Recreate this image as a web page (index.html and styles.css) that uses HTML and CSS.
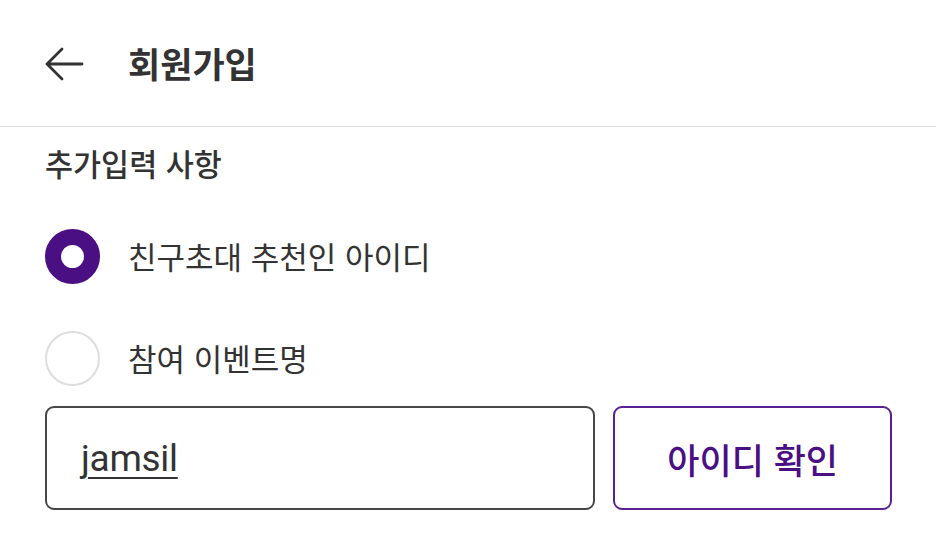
FILE: index.html
```html
<!DOCTYPE html>
<html lang="ko">
<head>
<meta charset="utf-8">
<title>회원가입</title>
<link rel="stylesheet" href="styles.css">
</head>
<body>
<header class="topbar">
  <svg class="back" width="40" height="36" viewBox="0 0 40 36" aria-hidden="true">
    <path d="M38 18 H3 M18 3 L3 18 L18 33" fill="none" stroke="#333" stroke-width="2.8" stroke-linecap="round" stroke-linejoin="round"/>
  </svg>
  <h1 class="title">회원가입</h1>
</header>
<main class="content">
  <h2 class="section-title">추가입력 사항</h2>
  <div class="radio-row row-first">
    <span class="radio checked"></span>
    <span class="radio-label">친구초대 추천인 아이디</span>
  </div>
  <div class="radio-row row-second">
    <span class="radio"></span>
    <span class="radio-label">참여 이벤트명</span>
  </div>
  <div class="input-row">
    <div class="text-field"><span class="typed">jamsil</span></div>
    <button class="check-btn">아이디 확인</button>
  </div>
</main>
</body>
</html>
```

FILE: styles.css
```css
html, body {
  margin: 0;
  padding: 0;
  background: #fff;
}
body {
  font-family: "Noto Sans CJK KR", "Noto Sans", sans-serif;
  color: #333;
  width: 936px;
  height: 539px;
  overflow: hidden;
}
.topbar {
  border-bottom: 1px solid #dcdcdc;
  display: flex;
  align-items: center;
  padding-left: 44px;
  box-sizing: border-box;
  height: 127px;
}
.back {
  display: block;
  margin-top: 2px;
}
.title {
  margin: 0 0 0 44px;
  font-size: 35px;
  font-weight: 700;
  line-height: 40px;
  color: #333;
}
.content {
  padding: 0 44px 0 45px;
  display: flex;
  flex-direction: column;
}
.section-title {
  margin: 16px 0 0 0;
  font-size: 30.5px;
  font-weight: 500;
  line-height: 40px;
  color: #333;
}
.radio-row {
  display: flex;
  align-items: center;
  gap: 28px;
  height: 56px;
}
.row-first {
  margin-top: 45px;
}
.row-second {
  margin-top: 46px;
}
.radio {
  width: 55px;
  height: 55px;
  box-sizing: border-box;
  border-radius: 50%;
  border: 2px solid #dedede;
  flex: none;
}
.radio.checked {
  border: 16.5px solid #4b0f84;
}
.radio-label {
  font-size: 31px;
  font-weight: 400;
  line-height: 40px;
  color: #333;
}
.input-row {
  display: flex;
  gap: 18px;
  margin-top: 20px;
  height: 104px;
}
.text-field {
  width: 551px;
  box-sizing: border-box;
  border: 2px solid #474747;
  border-radius: 9px;
  display: flex;
  align-items: center;
  padding-left: 34px;
}
.typed {
  font-family: Roboto, "Noto Sans", sans-serif;
  font-size: 37px;
  color: #333;
  text-decoration: underline;
  text-decoration-thickness: 2px;
  text-underline-offset: 6px;
  letter-spacing: -0.3px;
}
.check-btn {
  width: 279px;
  box-sizing: border-box;
  border: 2px solid #5b2091;
  border-radius: 9px;
  background: #fff;
  font-family: "Noto Sans CJK KR", "Noto Sans", sans-serif;
  font-size: 35px;
  font-weight: 500;
  color: #4b0f84;
  padding: 0;
}
```
